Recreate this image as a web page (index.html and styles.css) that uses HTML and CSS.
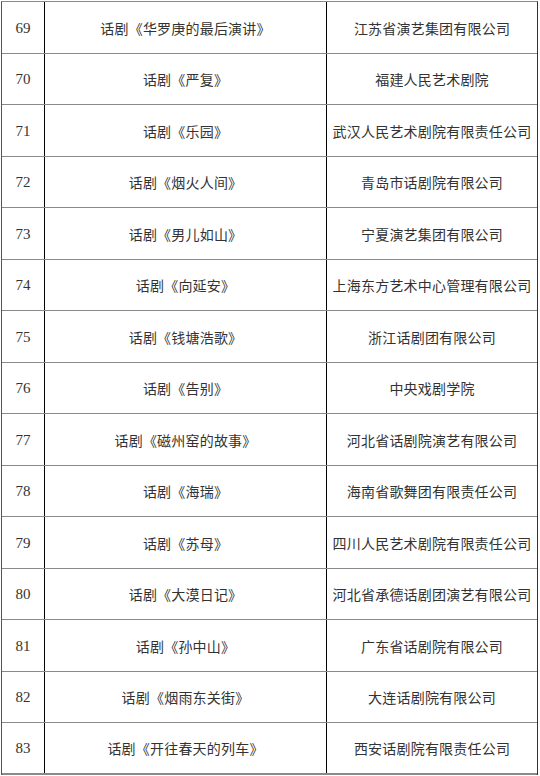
FILE: index.html
```html
<!DOCTYPE html>
<html lang="zh">
<head>
<meta charset="utf-8">
<link rel="stylesheet" href="styles.css">
</head>
<body>
<div class="table">
  <div class="row"><div class="num">69</div><div class="cell">话剧《华罗庚的最后演讲》</div><div class="cell">江苏省演艺集团有限公司</div></div>
  <div class="row"><div class="num">70</div><div class="cell">话剧《严复》</div><div class="cell">福建人民艺术剧院</div></div>
  <div class="row"><div class="num">71</div><div class="cell">话剧《乐园》</div><div class="cell">武汉人民艺术剧院有限责任公司</div></div>
  <div class="row"><div class="num">72</div><div class="cell">话剧《烟火人间》</div><div class="cell">青岛市话剧院有限公司</div></div>
  <div class="row"><div class="num">73</div><div class="cell">话剧《男儿如山》</div><div class="cell">宁夏演艺集团有限公司</div></div>
  <div class="row"><div class="num">74</div><div class="cell">话剧《向延安》</div><div class="cell">上海东方艺术中心管理有限公司</div></div>
  <div class="row"><div class="num">75</div><div class="cell">话剧《钱塘浩歌》</div><div class="cell">浙江话剧团有限公司</div></div>
  <div class="row"><div class="num">76</div><div class="cell">话剧《告别》</div><div class="cell">中央戏剧学院</div></div>
  <div class="row"><div class="num">77</div><div class="cell">话剧《磁州窑的故事》</div><div class="cell">河北省话剧院演艺有限公司</div></div>
  <div class="row"><div class="num">78</div><div class="cell">话剧《海瑞》</div><div class="cell">海南省歌舞团有限责任公司</div></div>
  <div class="row"><div class="num">79</div><div class="cell">话剧《苏母》</div><div class="cell">四川人民艺术剧院有限责任公司</div></div>
  <div class="row"><div class="num">80</div><div class="cell">话剧《大漠日记》</div><div class="cell">河北省承德话剧团演艺有限公司</div></div>
  <div class="row"><div class="num">81</div><div class="cell">话剧《孙中山》</div><div class="cell">广东省话剧院有限公司</div></div>
  <div class="row"><div class="num">82</div><div class="cell">话剧《烟雨东关街》</div><div class="cell">大连话剧院有限公司</div></div>
  <div class="row last"><div class="num">83</div><div class="cell">话剧《开往春天的列车》</div><div class="cell">西安话剧院有限责任公司</div></div>
</div>
</body>
</html>
```

FILE: styles.css
```css
html, body {
  margin: 0;
  padding: 0;
  background: #fff;
}
body {
  font-family: "Liberation Serif", "Noto Sans CJK SC", serif;
  font-size: 14px;
  color: #333;
}
.table {
  margin: 1px 0 0 1px;
  width: 537px;
  box-sizing: border-box;
  border-top: 1px solid #8a8a8a;
  border-left: 1px solid #555;
  border-right: 1px solid #333;
}
.row {
  display: grid;
  grid-template-columns: 43px 282px 1fr;
  height: 51.5px;
  box-sizing: border-box;
  border-bottom: 1px solid #8a8a8a;
}
.row.last {
  border-bottom: 2px solid #8a8a8a;
}
.num, .cell {
  display: flex;
  align-items: center;
  justify-content: center;
}
.num {
  border-right: 1px solid #000;
  font-family: "Liberation Serif", serif;
  font-size: 15px;
  padding-top: 2px;
}
.cell {
  font-family: "Noto Sans CJK SC", sans-serif;
  font-size: 14px;
  letter-spacing: 0.2px;
  padding-top: 1px;
}
.cell:nth-child(2) {
  border-right: 1px solid #000;
}
```
